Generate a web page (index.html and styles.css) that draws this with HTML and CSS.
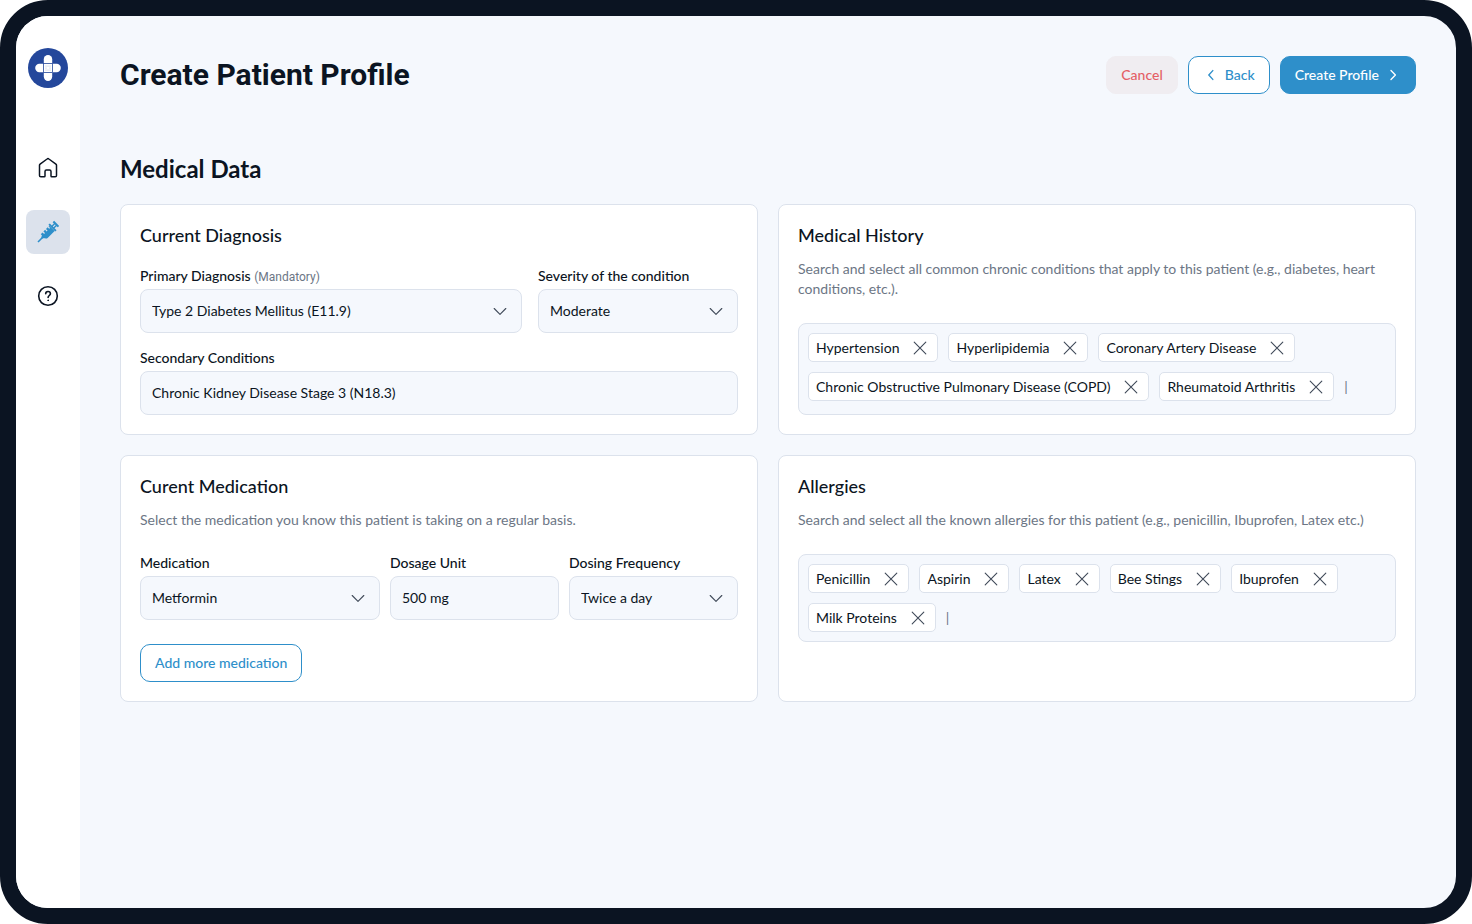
FILE: index.html
```html
<!DOCTYPE html>
<html lang="en">
<head>
<meta charset="utf-8">
<meta name="viewport" content="width=device-width, initial-scale=1">
<title>Create Patient Profile</title>
<link rel="stylesheet" href="styles.css">
</head>
<body>
<svg class="sprite" aria-hidden="true">
  <symbol id="chevron-down" viewBox="0 0 20 20"><path d="M4.200 7.500l5.800 5.800 5.800-5.800" fill="none" stroke="currentColor" stroke-width="1.100" stroke-linecap="round" stroke-linejoin="round"/></symbol>
  <symbol id="cross" viewBox="0 0 20 20"><path d="M4.200 4.200l11.600 11.600M15.800 4.200L4.200 15.800" fill="none" stroke="currentColor" stroke-width="1.100" stroke-linecap="round"/></symbol>
</svg>
<div class="device">
  <nav class="sidebar" aria-label="Main">
    <a class="logo" href="#" aria-label="Clinic">
      <svg width="40" height="40" viewBox="0 0 40 40">
        <circle cx="20" cy="20" r="20" fill="#24479b"/>
        <rect x="15.800" y="7" width="8.400" height="26" rx="4.200" fill="#fff"/>
        <rect x="7.200" y="15.800" width="25.600" height="8.400" rx="4.200" fill="#fff"/>
        <rect x="15.500" y="15.500" width="9" height="9" fill="#fff" stroke="#24479b" stroke-width=".8"/>
        <g fill="#24479b" opacity=".4"><circle cx="18" cy="18" r=".5"/><circle cx="20" cy="18" r=".5"/><circle cx="22" cy="18" r=".5"/><circle cx="18" cy="20" r=".5"/><circle cx="22" cy="20" r=".5"/><circle cx="18" cy="22" r=".5"/><circle cx="20" cy="22" r=".5"/><circle cx="22" cy="22" r=".5"/></g>
      </svg>
    </a>
    <a class="nav-item" href="#" aria-label="Home">
      <svg width="24" height="24" viewBox="0 0 24 24" fill="none" stroke="currentColor" stroke-width="1.500" stroke-linejoin="round" stroke-linecap="round"><path d="M3.500 9.300c0-.5.2-.9.6-1.200l7-5.100c.5-.4 1.300-.4 1.800 0l7 5.100c.4.3.6.7.6 1.200v10.200c0 .8-.6 1.300-1.300 1.300h-3.400c-.5 0-.8-.4-.8-.8v-4.600c0-.8-.6-1.400-1.400-1.400h-3.200c-.8 0-1.400.6-1.400 1.400V20c0 .5-.4.8-.8.8H4.800c-.7 0-1.300-.5-1.300-1.300z"/></svg>
    </a>
    <a class="nav-item active" href="#" aria-label="Patients" aria-current="page">
      <svg width="24" height="24" viewBox="0 0 24 24" fill="currentColor"><g transform="translate(2 22) rotate(-45)">
        <path d="M0-.8h7v1.600H0z"/>
        <path d="M5.500-.8L7.500-2V-3.600H10V-1.400H11.300V-3.600H13.600V-1.400H14.900V-3.600H17.200V-1.400H18.500V-3.600H19.500V4H10C7.500 4 7.400 1.200 5.500.8z"/>
        <path d="M19.500-4.800h2v9.600h-2zM21-1.900h4v1.400h-4zM21 .6h4v1.400h-4zM24.300-3.600h2.100v7.200h-2.100z"/>
      </g></svg>
    </a>
    <a class="nav-item" href="#" aria-label="Help">
      <svg width="24" height="24" viewBox="0 0 24 24" fill="none" stroke="currentColor" stroke-width="1.600" stroke-linecap="round"><circle cx="12" cy="12" r="9.300"/><path d="M9.700 9.800c0-1.400 1-2.300 2.300-2.300s2.400.9 2.400 2.200c0 1.700-2.300 1.900-2.300 3.700"/><circle cx="12.100" cy="16.300" r=".4" fill="currentColor" stroke-width="1"/></svg>
    </a>
  </nav>
  <main class="main">
    <header class="header">
      <h1>Create Patient Profile</h1>
      <div class="actions">
        <button class="btn cancel" type="button">Cancel</button>
        <button class="btn outline" type="button"><svg width="16" height="16" viewBox="0 0 16 16" fill="none" stroke="currentColor" stroke-width="1.400" stroke-linecap="round" stroke-linejoin="round"><path d="M9.800 3.600L5.800 8l4 4.400"/></svg>Back</button>
        <button class="btn primary" type="button">Create Profile<svg width="16" height="16" viewBox="0 0 16 16" fill="none" stroke="currentColor" stroke-width="1.400" stroke-linecap="round" stroke-linejoin="round"><path d="M6 3.600L10.400 8 6 12.400"/></svg></button>
      </div>
    </header>
    <h2>Medical Data</h2>
    <div class="cards">
      <section class="card">
        <h3>Current Diagnosis</h3>
        <div class="fields diagnosis">
          <div class="field">
            <label for="primary">Primary Diagnosis <span class="hint">(Mandatory)</span></label>
            <div class="select"><select id="primary"><option>Type 2 Diabetes Mellitus (E11.9)</option></select><svg><use href="#chevron-down"/></svg></div>
          </div>
          <div class="field">
            <label for="severity">Severity of the condition</label>
            <div class="select"><select id="severity"><option>Moderate</option></select><svg><use href="#chevron-down"/></svg></div>
          </div>
          <div class="field wide">
            <label for="secondary">Secondary Conditions</label>
            <input id="secondary" type="text" value="Chronic Kidney Disease Stage 3 (N18.3)">
          </div>
        </div>
      </section>
      <section class="card">
        <h3>Medical History</h3>
        <p>Search and select all common chronic conditions that apply to this patient (e.g., diabetes, heart conditions, etc.).</p>
        <div class="chips grow">
          <span class="chip">Hypertension<button type="button" aria-label="Remove Hypertension"><svg><use href="#cross"/></svg></button></span>
          <span class="chip">Hyperlipidemia<button type="button" aria-label="Remove Hyperlipidemia"><svg><use href="#cross"/></svg></button></span>
          <span class="chip">Coronary Artery Disease<button type="button" aria-label="Remove Coronary Artery Disease"><svg><use href="#cross"/></svg></button></span>
          <span class="chip">Chronic Obstructive Pulmonary Disease (COPD)<button type="button" aria-label="Remove COPD"><svg><use href="#cross"/></svg></button></span>
          <span class="chip">Rheumatoid Arthritis<button type="button" aria-label="Remove Rheumatoid Arthritis"><svg><use href="#cross"/></svg></button></span>
          <span class="caret">|</span>
        </div>
      </section>
      <section class="card">
        <h3>Curent Medication</h3>
        <p>Select the medication you know this patient is taking on a regular basis.</p>
        <div class="fields medication">
          <div class="field">
            <label for="medication">Medication</label>
            <div class="select"><select id="medication"><option>Metformin</option></select><svg><use href="#chevron-down"/></svg></div>
          </div>
          <div class="field">
            <label for="dosage">Dosage Unit</label>
            <input id="dosage" type="text" value="500 mg">
          </div>
          <div class="field">
            <label for="frequency">Dosing Frequency</label>
            <div class="select"><select id="frequency"><option>Twice a day</option></select><svg><use href="#chevron-down"/></svg></div>
          </div>
        </div>
        <button class="btn outline add" type="button">Add more medication</button>
      </section>
      <section class="card">
        <h3>Allergies</h3>
        <p>Search and select all the known allergies for this patient (e.g., penicillin, Ibuprofen, Latex etc.)</p>
        <div class="chips">
          <span class="chip">Penicillin<button type="button" aria-label="Remove Penicillin"><svg><use href="#cross"/></svg></button></span>
          <span class="chip">Aspirin<button type="button" aria-label="Remove Aspirin"><svg><use href="#cross"/></svg></button></span>
          <span class="chip">Latex<button type="button" aria-label="Remove Latex"><svg><use href="#cross"/></svg></button></span>
          <span class="chip">Bee Stings<button type="button" aria-label="Remove Bee Stings"><svg><use href="#cross"/></svg></button></span>
          <span class="chip">Ibuprofen<button type="button" aria-label="Remove Ibuprofen"><svg><use href="#cross"/></svg></button></span>
          <span class="chip">Milk Proteins<button type="button" aria-label="Remove Milk Proteins"><svg><use href="#cross"/></svg></button></span>
          <span class="caret">|</span>
        </div>
      </section>
    </div>
  </main>
</div>
</body>
</html>
```
FILE: styles.css
```css
* {
  box-sizing: border-box;
}

body {
  margin: 0;
  background: #fff;
  color: #0b1422;
  font: 400 14px/20px Lato, "Open Sans", sans-serif;
}

h1,
h2,
h3,
p {
  margin: 0;
}

button,
input,
select {
  font: inherit;
  color: inherit;
}

.sprite {
  display: none;
}

.device {
  display: flex;
  min-height: 100vh;
  border: 16px solid #0b1422;
  border-radius: 48px;
  background: #f5f8fd;
  overflow: hidden;
}

.sidebar {
  flex: none;
  display: flex;
  flex-direction: column;
  align-items: center;
  gap: 20px;
  width: 64px;
  padding-top: 32px;
  background: #fff;
}

.logo {
  height: 40px;
  margin-bottom: 38px;
}

.nav-item {
  display: grid;
  place-items: center;
  width: 44px;
  height: 44px;
  border-radius: 8px;
  color: #0b1422;
}

.nav-item.active {
  background: #dce2ec;
  color: #2e8fca;
}

.main {
  flex: 1;
  min-width: 0;
  padding: 40px;
}

.header {
  display: flex;
  align-items: center;
  justify-content: space-between;
}

h1 {
  font: 700 30px/38px Roboto, sans-serif;
}

h2 {
  margin: 60px 0 20px;
  font-size: 24px;
  line-height: 30px;
  font-weight: 700;
}

.actions {
  display: flex;
  gap: 10px;
}

.btn {
  display: flex;
  align-items: center;
  gap: 6px;
  height: 38px;
  padding: 0 14px;
  border: 1px solid #2e8fca;
  border-radius: 10px;
  font-weight: 500;
}

.cancel {
  border-color: #f0edf1;
  background: #f0edf1;
  color: #e45f66;
}

.outline {
  background: #fff;
  color: #2e8fca;
}

.primary {
  background: #2e8fca;
  color: #fff;
}

.cards {
  display: grid;
  grid-template-columns: 1fr 1fr;
  gap: 20px;
}

.card {
  display: flex;
  flex-direction: column;
  align-items: stretch;
  min-width: 0;
  padding: 19px;
  border: 1px solid #dce2ec;
  border-radius: 8px;
  background: #fff;
}

h3 {
  font-size: 18px;
  line-height: 23px;
  font-weight: 500;
}

.card p {
  margin: 12px 0 24px;
  color: #6c7685;
}

.fields {
  display: grid;
}

.diagnosis {
  grid-template-columns: 1fr 200px;
  gap: 16px;
  margin-top: 20px;
}

.medication {
  grid-template-columns: 240fr 169fr 169fr;
  gap: 10px;
}

.field {
  display: flex;
  flex-direction: column;
  gap: 4px;
  min-width: 0;
}

.wide {
  grid-column: 1 / -1;
}

label {
  line-height: 18px;
  font-weight: 500;
}

.hint {
  color: #6c7685;
  font: 400 12px/16px Roboto, sans-serif;
}

input,
select {
  width: 100%;
  height: 44px;
  padding: 0 11px;
  border: 1px solid #dce2ec;
  border-radius: 8px;
  background: #f5f8fd;
  appearance: none;
}

input {
  padding-bottom: 2px;
}

.select {
  display: grid;
  align-items: center;
}

.select > * {
  grid-area: 1 / 1;
}

.select svg {
  justify-self: end;
  width: 20px;
  height: 20px;
  margin-right: 12px;
  color: #3f4958;
  pointer-events: none;
}

.add {
  align-self: flex-start;
  margin-top: 24px;
}

.chips {
  display: flex;
  flex-wrap: wrap;
  align-content: flex-start;
  align-items: center;
  gap: 10px;
  padding: 9px;
  border: 1px solid #dce2ec;
  border-radius: 8px;
  background: #f5f8fd;
}

.grow {
  flex: 1;
}

.chip {
  display: flex;
  align-items: center;
  gap: 11px;
  height: 29px;
  padding: 0 7px;
  border: 1px solid #dce2ec;
  border-radius: 5px;
  background: #fff;
}

.chip button {
  display: grid;
  padding: 0;
  border: 0;
  background: none;
  color: #3f4958;
}

.chip svg {
  width: 20px;
  height: 20px;
}

.caret {
  color: #6c7685;
}
```
